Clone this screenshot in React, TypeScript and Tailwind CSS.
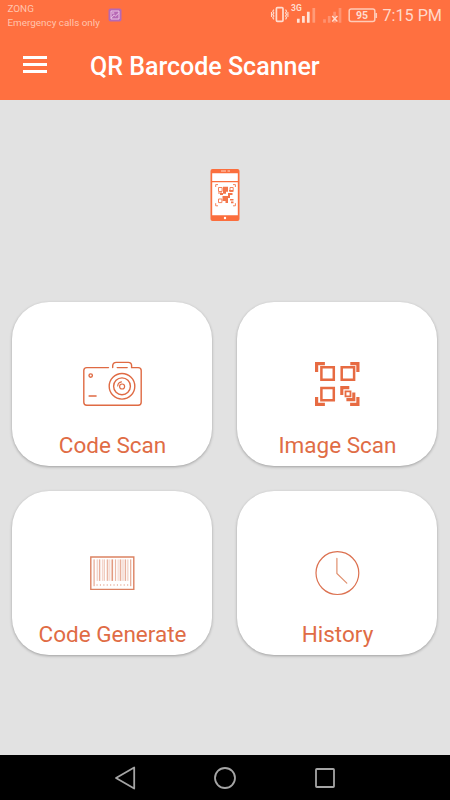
import type { ReactNode } from "react"

const BARS = [
    { x: 13, w: 1.2, o: 0.6 },
    { x: 16.2, w: 1, o: 0.4 },
    { x: 18.4, w: 1.4, o: 0.55 },
    { x: 21.4, w: 0.8, o: 0.4 },
    { x: 23.2, w: 1, o: 0.5 },
    { x: 26.2, w: 1.6, o: 0.5 },
    { x: 29, w: 0.7, o: 0.45 },
    { x: 31, w: 1.6, o: 0.7 },
    { x: 34.4, w: 1.2, o: 0.5 },
    { x: 37.2, w: 0.8, o: 0.4 },
    { x: 39.2, w: 1.6, o: 0.55 },
    { x: 42, w: 1, o: 0.4 },
    { x: 44.2, w: 1.4, o: 0.55 },
    { x: 47, w: 0.8, o: 0.5 },
    { x: 49.6, w: 1.2, o: 0.6 },
]

function CameraIcon() {
    return (
        <svg width="64" height="50" viewBox="-0.5 0 64 50" fill="none" stroke="#df6a43" strokeWidth="1.4" strokeLinecap="round">
            <path d="M28 8.6H6.3a3 3 0 0 0-3 3v31.7a3 3 0 0 0 3 3h51.4a3 3 0 0 0 3-3V11.6a3 3 0 0 0-3-3h-6.6V6.8a3.4 3.4 0 0 0-3.4-3.4H35.8a3.6 3.6 0 0 0-3.6 3.4v1.8" />
            <path d="M36.7 8.6h10M8.6 37h7" />
            <circle cx="10.2" cy="16.6" r="1.7" />
            <circle cx="41.5" cy="27.3" r="12.8" />
            <circle cx="41.5" cy="27.3" r="8.4" />
            <circle cx="41.6" cy="27.5" r="2.5" strokeWidth="1.2" />
            <path d="M37.2 27a4.4 4.4 0 0 1 3.8-4.1" strokeWidth="1.1" />
        </svg>
    )
}

function QrIcon() {
    return (
        <svg width="64" height="50" viewBox="-0.5 0 64 50" fill="none" stroke="#e76b42">
            <g strokeWidth="2.5">
                <path d="M15.9 8.3h12.4v12.4H15.9zM36.2 8.3h12.4v12.4H36.2zM15.9 28.9h12.4v12.4H15.9z" />
                <path d="M40 32.4h5v5h-5z" strokeWidth="1.8" />
            </g>
            <g strokeWidth="3.2">
                <path d="M19.4 4.6H11.1v8.5M44.8 4.6h7.6v8.5M11.1 37.9v7.5h8.3M52.4 37.9v7.5h-7.8" />
                <path d="M43.8 28.6h-7.5v7.5M48.3 33.6v7h-7.4" strokeWidth="3.1" />
            </g>
        </svg>
    )
}

function BarcodeIcon() {
    return (
        <svg width="64" height="50" viewBox="-0.5 0 64 50">
            <path d="M10.3 9h43v32.4h-43z" fill="none" stroke="#dc8262" strokeWidth="1.4" />
            {BARS.map((bar, i) => (
                <rect
                    key={bar.x}
                    x={bar.x}
                    y="11.4"
                    width={bar.w}
                    height={i === 0 || i === BARS.length - 1 ? 26.8 : 21.5}
                    fill="#d6704b"
                    opacity={bar.o}
                />
            ))}
            <path d="M16 37h32" stroke="#d6704b" strokeWidth="1.8" strokeDasharray="1.1 2.3" opacity="0.4" />
        </svg>
    )
}

function ClockIcon() {
    return (
        <svg width="64" height="50" viewBox="-0.5 0 64 50" fill="none" stroke="#dc7150" strokeWidth="1.2" strokeLinecap="round">
            <circle cx="31.9" cy="25.1" r="21.4" />
            <path d="M31.4 10.4v15l9.9 9.7" stroke="#e0906f" />
        </svg>
    )
}

function PhoneIcon() {
    return (
        <svg width="30" height="52" viewBox="0 0 30 52" fill="none">
            <rect x="0.5" width="29" height="52" rx="2" fill="#fb6e3d" />
            <path d="M2.2 4.2h25.6v7.8H2.2zM2.2 13.2h25.6v33H2.2z" fill="#fff" />
            <path d="M11 2h5M17.5 2h2.5" stroke="#ffd5c5" />
            <circle cx="15" cy="49" r="1.2" fill="#fff" />
            <g stroke="#f4835c" strokeWidth="1">
                <path d="M5.7 18v-2.4H8M23 15.6h2.4V18M5.7 34.2v2.6H8M23 36.8h2.4v-2.6" />
                <path d="M8.5 18.5h3.6v4H8.5zM20 18.5h3.2v4H20zM8.5 30h3.4v3.6H8.5z" />
            </g>
            <path d="M13 17.8h5v5h-2v2h-3zM10 24h3v2h-3zM12.5 27h5.5v7h-2.5v-2h-3zM18 24h4.5v2H20v3h-2zM20 30h3.5v1.6H20zM21 32.5h2.5v1.7H21zM8 23.5h4v1H8zM19 21h4v1.5h-4z" fill="#f3764b" />
        </svg>
    )
}

function StatusIcons() {
    return (
        <svg width="110" height="24" viewBox="0 0 110 24" fill="none" className="font-[Roboto,sans-serif]">
            {/* vibrate */}
            <g stroke="#ffdccf" strokeWidth="1.3">
                <rect x="6.4" y="7.7" width="6.6" height="13.6" rx="1" strokeWidth="1.7" />
                <path d="M3.9 9.6l-1.1 1.7 1.1 1.6-1.1 1.6 1.1 1.6-1.1 1.6 1.1 1.7M1.5 12v5M15.5 9.6l1.1 1.7-1.1 1.6 1.1 1.6-1.1 1.6 1.1 1.6-1.1 1.7M17.9 12v5" strokeWidth="1.1" />
            </g>
            {/* mobile signal */}
            <text x="21" y="10.8" fontSize="8.5" fontWeight="700" fill="#ffdccf">3G</text>
            <path d="M28.3 18.7v4M33.4 16v6.7M38.3 11.7v11" stroke="#ffe2d7" strokeWidth="2.7" />
            <path d="M43.8 8v14.7" stroke="#ff9b78" strokeWidth="2.7" />
            <path d="M54.5 19.2v3.5M59.2 16v6.7M64.6 11.8v10.9M70 8v14.7" stroke="#ff9270" strokeWidth="2.7" />
            <path d="M62.2 16l5.2 5.5M67.4 16l-5.2 5.5" stroke="#ffdccf" strokeWidth="1.4" />
            {/* battery */}
            <rect x="79.2" y="8.9" width="25.6" height="12.6" rx="2" stroke="#ffcbb8" strokeWidth="1.5" />
            <path d="M106.2 13v5" stroke="#ffcbb8" strokeWidth="1.7" />
            <text x="92.1" y="18.9" fontSize="10.5" fontWeight="700" fill="#ffdccf" textAnchor="middle">95</text>
        </svg>
    )
}

function Tile({ label, children }: { label: string; children: ReactNode }) {
    return (
        <button className="flex h-[164px] flex-col items-center rounded-[37px] bg-white pt-[57px] shadow-[0_1px_3px_rgba(0,0,0,0.3)]">
            {children}
            <span className="mt-5 whitespace-nowrap pl-px text-[22.5px] leading-8 text-[#e06c45]">{label}</span>
        </button>
    )
}

export default function App() {
    return (
        <div className="flex h-[800px] w-[450px] flex-col overflow-hidden bg-[#e2e2e2] font-[Roboto,sans-serif]">
            <header className="h-[100px] bg-[#ff7040]">
                <div className="flex h-[31px] items-start pl-[7.5px]">
                    <div className="w-[93px] whitespace-nowrap pt-[2px] text-[9.9px] leading-[13.5px] text-[#ffc4ae]">
                        <div>ZONG</div>
                        <div>Emergency calls only</div>
                    </div>
                    <svg width="14" height="14" viewBox="0 0 14 14" fill="none" className="ml-[7px] mt-2">
                        <rect x="0.5" y="0.5" width="13" height="13" rx="2" fill="#b668b5" />
                        <path d="M3 3h8v8H3zM3.2 10l3-3 1.3 1 3.3-3" stroke="#f1ceeb" strokeWidth="0.9" />
                        <circle cx="5.2" cy="5.1" r="0.8" stroke="#f1ceeb" strokeWidth="0.6" />
                    </svg>
                    <div className="ml-auto flex items-start pr-[8px]">
                        <StatusIcons />
                        <span className="ml-[2px] whitespace-nowrap pt-1 text-[16.2px] leading-6 text-[#ffd8ca]">7:15 PM</span>
                    </div>
                </div>
                <div className="flex h-[69px] items-center">
                    <button className="-mt-0.5 ml-[23px] flex w-[67px] flex-col gap-[4.5px]" aria-label="Menu">
                        <span className="h-[2.5px] w-6 bg-white" />
                        <span className="h-[2.5px] w-6 bg-white" />
                        <span className="h-[2.5px] w-6 bg-white" />
                    </button>
                    <h1 className="mt-0.5 whitespace-nowrap text-[25px] font-medium leading-8 text-white">QR Barcode Scanner</h1>
                </div>
            </header>

            <main className="flex flex-1 flex-col items-center">
                <div className="mt-[69px]">
                    <PhoneIcon />
                </div>
                <div className="mt-[81px] grid w-full grid-cols-2 gap-[25px] pl-3 pr-[13px]">
                    <Tile label="Code Scan"><CameraIcon /></Tile>
                    <Tile label="Image Scan"><QrIcon /></Tile>
                    <Tile label="Code Generate"><BarcodeIcon /></Tile>
                    <Tile label="History"><ClockIcon /></Tile>
                </div>
            </main>

            <nav className="flex h-[45px] items-center justify-center gap-[76px] bg-black">
                <svg width="24" height="24" viewBox="0 0 24 24" fill="none" stroke="#a5a5a5" strokeWidth="1.8" strokeLinejoin="round">
                    <path d="M3 12L21.2 1.5v21z" />
                </svg>
                <svg width="24" height="24" viewBox="0 0 24 24" fill="none" stroke="#a5a5a5" strokeWidth="1.8">
                    <circle cx="12" cy="12" r="10" />
                </svg>
                <svg width="24" height="24" viewBox="0 0 24 24" fill="none" stroke="#a5a5a5" strokeWidth="1.8">
                    <rect x="3" y="3" width="18" height="18" rx="0.8" />
                </svg>
            </nav>
        </div>
    )
}
